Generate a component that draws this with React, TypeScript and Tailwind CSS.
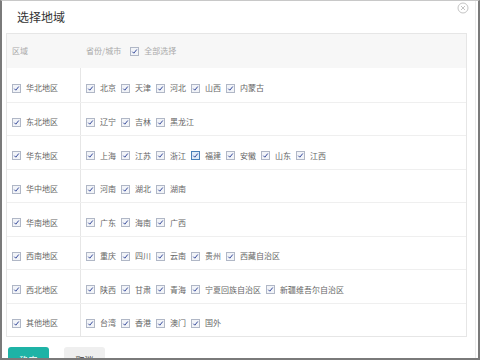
import React from 'react';

const regions: { name: string; cities: string[] }[] = [
  { name: '华北地区', cities: ['北京', '天津', '河北', '山西', '内蒙古'] },
  { name: '东北地区', cities: ['辽宁', '吉林', '黑龙江'] },
  { name: '华东地区', cities: ['上海', '江苏', '浙江', '福建', '安徽', '山东', '江西'] },
  { name: '华中地区', cities: ['河南', '湖北', '湖南'] },
  { name: '华南地区', cities: ['广东', '海南', '广西'] },
  { name: '西南地区', cities: ['重庆', '四川', '云南', '贵州', '西藏自治区'] },
  { name: '西北地区', cities: ['陕西', '甘肃', '青海', '宁夏回族自治区', '新疆维吾尔自治区'] },
  { name: '其他地区', cities: ['台湾', '香港', '澳门', '国外'] },
];

const Check: React.FC<{ focus?: boolean }> = ({ focus }) => (
  <span
    className={
      focus
        ? 'inline-flex w-[9px] h-[9px] shrink-0 items-center justify-center border border-[#4a80b8] bg-[#dfecf9]'
        : 'inline-flex w-[9px] h-[9px] shrink-0 items-center justify-center border border-[#b0b7c6] bg-[#f2f4f8]'
    }
  >
    <svg width="7" height="7" viewBox="0 0 7 7">
      <path d="M1.3 3.7 L2.8 5.2 L5.8 1.5" fill="none" stroke="#34489a" strokeWidth="1" />
    </svg>
  </span>
);

export default function App() {
  return (
    <div className="w-[480px] h-[360px] overflow-hidden bg-white border-2 border-t border-[#7a7a7a] border-t-[#c8c8c8] font-['Noto_Sans_CJK_SC','Liberation_Sans',sans-serif]">
      <div className="relative h-full mr-[2px] border-r border-[#ececec] pl-[4px] pr-[8px]">
        <svg className="absolute right-[6px] top-[1px]" width="12" height="12" viewBox="0 0 12 12">
          <circle cx="6" cy="6" r="5" fill="none" stroke="#c4c4c4" strokeWidth="1" />
          <path d="M4 4 L8 8 M8 4 L4 8" stroke="#c4c4c4" strokeWidth="1" />
        </svg>
        <div className="h-[32px] pl-[11px] flex items-center text-[12px] text-[#333]">选择地域</div>
        <div className="border border-[#e6e6e6] text-[8px] text-[#666]">
          <div className="h-[34px] bg-[#f7f7f7] flex items-center text-[#aaa]">
            <div className="w-[74px] pl-[5px]">区域</div>
            <div className="flex items-center pl-[5px]">
              <span>省份/城市</span>
              <span className="ml-[9px] mr-[5px] flex"><Check /></span>
              <span>全部选择</span>
            </div>
          </div>
          {regions.map((r, i) => (
            <div key={r.name} className={`flex h-[33.5px] ${i > 0 ? 'border-t border-[#efefef]' : ''}`}>
              <div className="w-[74px] border-r border-[#e6e6e6] pl-[5px] pt-[7px] flex items-center gap-[5px]">
                <Check />
                <span>{r.name}</span>
              </div>
              <div className="flex items-center pl-[5px] pt-[7px] gap-[5px]">
                {r.cities.map((c) => (
                  <span key={c} className="flex items-center gap-[5px]">
                    <Check focus={c === '福建'} />
                    <span>{c}</span>
                  </span>
                ))}
              </div>
            </div>
          ))}
        </div>
        <div className="mt-[10px] flex gap-[15px] pl-[2px] text-[9px]">
          <button className="w-[41px] h-[22px] rounded-[3px] bg-[#1eb3a6] text-white pt-[6px]">确定</button>
          <button className="w-[41px] h-[22px] rounded-[3px] bg-[#efefef] text-[#444] pt-[6px]">取消</button>
        </div>
      </div>
    </div>
  );
}
